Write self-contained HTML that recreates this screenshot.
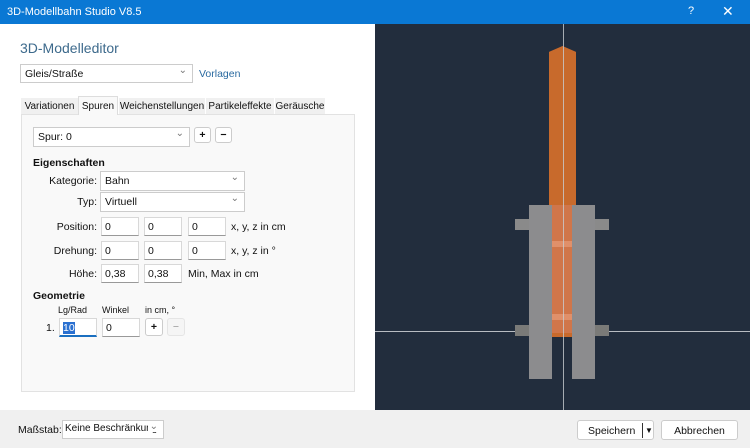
<!DOCTYPE html><html><head><style>
*{box-sizing:border-box;margin:0;padding:0}
body{width:750px;height:448px;overflow:hidden;font-family:"Liberation Sans",sans-serif;font-size:10.5px;color:#111;background:#fff;position:relative;white-space:nowrap}
.a{position:absolute}
.in{position:absolute;background:#fff;border:1px solid #d8d8d8;border-bottom:1px solid #999;height:19px;padding:3px 3px;font-size:10.5px}
.sel{position:absolute;background:#fff;border:1px solid #ccc;height:20px;padding:3px 4px;font-size:10.5px;overflow:hidden}
.sel:after{content:"⌄";position:absolute;right:5px;top:0px;color:#777;font-size:10px;background:#fff;padding-left:2px}
.btn{position:absolute;background:#fff;border:1px solid #ccc;border-radius:3px;text-align:center;font-size:10.5px}
.lb{position:absolute;text-align:right;font-size:10.5px}
.g{position:absolute;background:#8a8a8a}
.tab{position:absolute;top:98px;height:16px;background:#f0f0f0;padding:3px 0;text-align:center;font-size:10px;overflow:hidden}
</style></head><body>
<div class="a" style="left:0;top:0;width:750px;height:24px;background:#0a78d4;color:#fff;font-size:11px;padding:6px 7px">3D-Modellbahn Studio V8.5
<span class="a" style="left:688px;top:5px">?</span><span class="a" style="left:722px;top:3px;font-size:14px">✕</span></div>
<div class="a" style="left:20px;top:40px;font-size:14px;color:#3d6a8c">3D-Modelleditor</div>
<div class="sel" style="left:20px;top:64px;width:173px;height:19px">Gleis/Straße</div>
<div class="a" style="left:199px;top:68px;color:#2a6aa0">Vorlagen</div>
<div class="a" style="left:21px;top:114px;width:334px;height:278px;background:#f9f9f9;border:1px solid #e2e2e2"></div>
<div class="tab" style="left:21px;width:57px">Variationen</div>
<div class="tab" style="left:78px;top:96px;height:19px;width:40px;background:#f9f9f9;border:1px solid #ddd;border-bottom:none;padding-top:4px">Spuren</div>
<div class="tab" style="left:119px;width:86px">Weichenstellungen</div>
<div class="tab" style="left:206px;width:68px">Partikeleffekte</div>
<div class="tab" style="left:275px;width:50px">Geräusche</div>
<div class="sel" style="left:33px;top:127px;width:157px">Spur: 0</div>
<div class="btn" style="left:194px;top:127px;width:17px;height:16px;font-weight:bold;line-height:14px">+</div>
<div class="btn" style="left:215px;top:127px;width:17px;height:16px;font-weight:bold;line-height:14px">−</div>
<div class="a" style="left:33px;top:157px;font-weight:bold">Eigenschaften</div>
<div class="lb" style="left:30px;width:67px;top:175px">Kategorie:</div><div class="sel" style="left:100px;top:171px;width:145px">Bahn</div>
<div class="lb" style="left:30px;width:67px;top:196px">Typ:</div><div class="sel" style="left:100px;top:192px;width:145px">Virtuell</div>
<div class="lb" style="left:30px;width:67px;top:221px">Position:</div>
<div class="in" style="left:101px;top:217px;width:38px">0</div><div class="in" style="left:144px;top:217px;width:38px">0</div><div class="in" style="left:188px;top:217px;width:38px">0</div>
<div class="a" style="left:231px;top:221px">x, y, z in cm</div>
<div class="lb" style="left:30px;width:67px;top:245px">Drehung:</div>
<div class="in" style="left:101px;top:241px;width:38px">0</div><div class="in" style="left:144px;top:241px;width:38px">0</div><div class="in" style="left:188px;top:241px;width:38px">0</div>
<div class="a" style="left:231px;top:245px">x, y, z in °</div>
<div class="lb" style="left:30px;width:67px;top:268px">Höhe:</div>
<div class="in" style="left:101px;top:264px;width:38px">0,38</div><div class="in" style="left:144px;top:264px;width:38px">0,38</div>
<div class="a" style="left:188px;top:268px">Min, Max in cm</div>
<div class="a" style="left:33px;top:290px;font-weight:bold">Geometrie</div>
<div class="a" style="left:58px;top:305px;font-size:9px">Lg/Rad</div><div class="a" style="left:102px;top:305px;font-size:9px">Winkel</div><div class="a" style="left:145px;top:305px;font-size:9px">in cm, °</div>
<div class="a" style="left:46px;top:322px">1.</div>
<div class="in" style="left:59px;top:318px;width:38px;border-bottom:2px solid #1a6fc0"><span style="background:#2a70d0;color:#fff">10</span></div>
<div class="in" style="left:102px;top:318px;width:38px">0</div>
<div class="btn" style="left:145px;top:318px;width:18px;height:18px;font-weight:bold;line-height:16px">+</div>
<div class="btn" style="left:167px;top:318px;width:18px;height:18px;color:#999;border-color:#e5e5e5;background:#f5f5f5;line-height:16px">−</div>
<div class="a" style="left:0;top:410px;width:750px;height:38px;background:#f0f0f0"></div>
<div class="a" style="left:18px;top:424px">Maßstab:</div>
<div class="sel" style="left:62px;top:420px;width:102px;height:19px;padding:2px 2px;font-size:10px">Keine Beschränkung</div>
<div class="btn" style="left:577px;top:420px;width:77px;height:20px;padding-top:4px;text-align:left;padding-left:10px">Speichern<span class="a" style="left:64px;top:2px;border-left:1px solid #333;height:15px;padding-left:2px;padding-top:3px;font-size:8px">▼</span></div>
<div class="btn" style="left:661px;top:420px;width:77px;height:20px;padding-top:4px">Abbrechen</div>
<div class="a" style="left:375px;top:24px;width:375px;height:386px;background:#222d3d;overflow:hidden">
<div class="a" style="left:0;top:307px;width:375px;height:1px;background:#b8bcc2"></div>
<div class="a" style="left:174px;top:22px;width:27px;height:291px;background:#c86a2c;clip-path:polygon(0 2%,50% 0,100% 2%,100% 100%,0 100%)"></div>
<div class="g" style="left:140px;top:195px;width:14px;height:11px"></div>
<div class="g" style="left:220px;top:195px;width:14px;height:11px"></div>
<div class="g" style="left:140px;top:301px;width:14px;height:11px;background:#7a7a78"></div>
<div class="g" style="left:220px;top:301px;width:14px;height:11px;background:#7a7a78"></div>
<div class="g" style="left:154px;top:181px;width:23px;height:174px;background:#8c8c8e"></div>
<div class="g" style="left:197px;top:181px;width:23px;height:174px;background:#8c8c8e"></div>
<div class="a" style="left:177px;top:181px;width:20px;height:128px;background:#d0764a"></div>
<div class="a" style="left:177px;top:217px;width:20px;height:6px;background:#e0906a"></div>
<div class="a" style="left:177px;top:290px;width:20px;height:6px;background:#e0906a"></div>
<div class="a" style="left:188px;top:0;width:1px;height:386px;background:#c8ccd0;opacity:.8"></div>
</div>
</body></html>
